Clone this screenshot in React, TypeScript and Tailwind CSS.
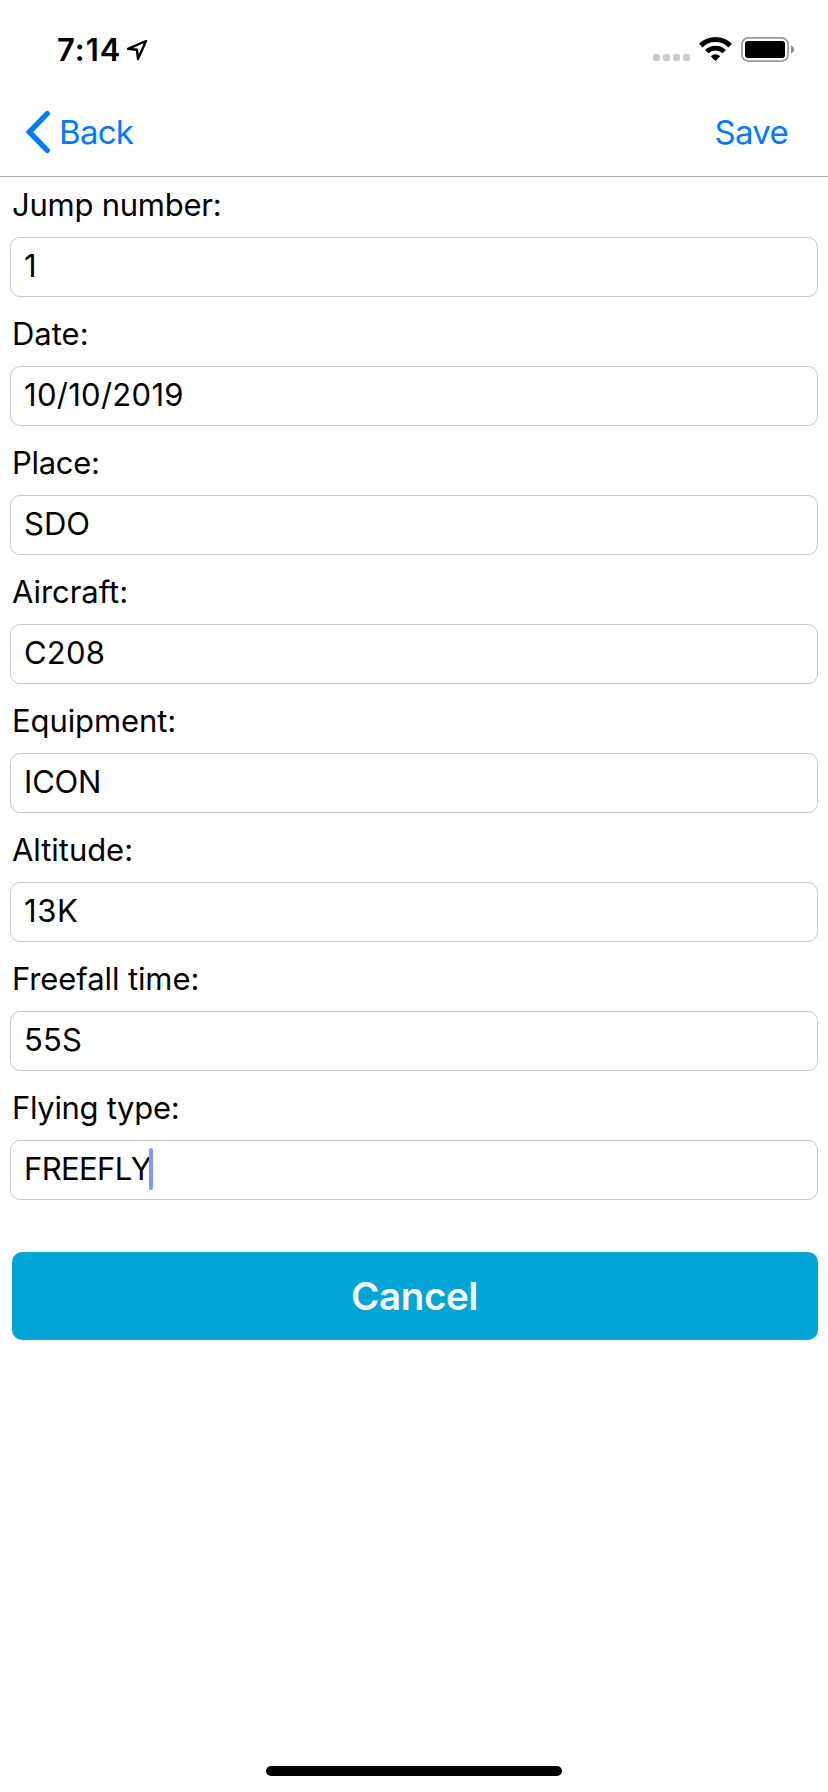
type Field = { label: string; value: string; labelClass: string; valueClass: string; focused?: boolean };

const fields: Field[] = [
  { label: "Jump number:", value: "1", labelClass: "tracking-[-0.25px]", valueClass: "tracking-[0px]" },
  { label: "Date:", value: "10/10/2019", labelClass: "tracking-[0px]", valueClass: "tracking-[0.28px]" },
  { label: "Place:", value: "SDO", labelClass: "tracking-[-0.3px]", valueClass: "tracking-[0px]" },
  { label: "Aircraft:", value: "C208", labelClass: "tracking-[-0.05px]", valueClass: "tracking-[0.2px]" },
  { label: "Equipment:", value: "ICON", labelClass: "tracking-[-0.1px]", valueClass: "tracking-[-0.2px]" },
  { label: "Altitude:", value: "13K", labelClass: "tracking-[-0.05px]", valueClass: "tracking-[0.6px]" },
  { label: "Freefall time:", value: "55S", labelClass: "tracking-[-0.1px]", valueClass: "tracking-[0.2px]" },
  { label: "Flying type:", value: "FREEFLY", labelClass: "tracking-[-0.32px]", valueClass: "tracking-[-0.6px]", focused: true },
];

function StatusBar() {
  return (
    <div className="flex h-[88px] items-start justify-between pl-[57px] pr-[34px] pt-[31px]">
      <div className="flex h-[38px] items-start">
        <span className="text-[31px] font-semibold leading-[38px] tracking-[1px]">7:14</span>
        <svg className="ml-[4px] mt-[7px]" width="24" height="24" viewBox="0 0 24 24" fill="none">
          <path d="M3 10.8 21 3 13 21 12 11.8Z" stroke="black" strokeWidth="2.4" strokeLinejoin="round" />
        </svg>
      </div>
      <div className="flex">
        <div className="mr-[9px] mt-[23px] flex gap-[3px]">
          {[0, 1, 2, 3].map((i) => (
            <span key={i} className="size-[7px] rounded-[2.5px] bg-[#cbcbcb]" />
          ))}
        </div>
        <svg className="mr-[9px] mt-[6px]" width="33" height="25" viewBox="0 0 33 25" fill="none" stroke="black">
          <path d="M1.8 8.6a21 21 0 0 1 29.4 0" strokeWidth="5" />
          <path d="M7.7 14.7a12.6 12.6 0 0 1 17.6 0" strokeWidth="4.6" />
          <path d="M16.5 24 11.8 19.2a6.8 6.8 0 0 1 9.4 0Z" fill="black" stroke="none" />
        </svg>
        <svg className="mt-[6px]" width="53" height="25" viewBox="0 0 53 25">
          <rect x="0.9" y="0.9" width="46.2" height="23.2" rx="6.5" fill="none" stroke="#999" strokeWidth="1.7" />
          <rect x="4" y="4" width="40" height="17" rx="3" fill="black" />
          <path d="M50 8.5c1.8.7 3 2.2 3 4s-1.2 3.3-3 4Z" fill="#888" />
        </svg>
      </div>
    </div>
  );
}

export default function App() {
  return (
    <div className="flex h-[1792px] w-[828px] flex-col bg-white font-['Inter',sans-serif] text-black">
      <StatusBar />
      <header className="flex h-[89px] items-center justify-between border-b border-[#adadad] pl-[24px] pr-[40px] text-[33px] text-[#007aff]">
        <button className="flex items-center">
          <svg width="28" height="46" viewBox="0 0 28 46" fill="none">
            <path d="M23.2 4.7 5.3 23 23.2 41.3" stroke="#007aff" strokeWidth="5.4" strokeLinecap="round" strokeLinejoin="miter" />
          </svg>
          <span className="ml-[7px] pt-[1px] tracking-[-0.7px]">Back</span>
        </button>
        <button className="pt-[1px] tracking-[-0.7px]">Save</button>
      </header>
      <main className="flex flex-col">
        <form className="flex flex-col gap-[9px] px-[10px]">
          {fields.map((f) => (
            <div key={f.label} className="flex flex-col text-[31px]">
              <label className="flex h-[60px] items-center pb-[3px] pl-[2px]">
                <span className={f.labelClass}>{f.label}</span>
              </label>
              <div className="flex h-[60px] items-center rounded-[10px] border border-[#c8c8c8] pb-[1px] pl-[13px]">
                <span className={"relative " + f.valueClass}>
                  {f.value}
                  {f.focused && <span className="absolute right-[-2px] top-[2px] h-[42px] w-[4px] rounded-full bg-[#7f99f6]" />}
                </span>
              </div>
            </div>
          ))}
        </form>
        <button className="ml-[12px] mr-[10px] mt-[52px] h-[88px] rounded-[10px] bg-[#03a5d4] pr-[1px] pt-[2px] text-[38.5px] font-semibold tracking-[-0.4px] text-[#f5f5f5]">Cancel</button>
      </main>
      <div className="mb-[16px] mt-auto h-[10px] w-[296px] self-center rounded-full bg-black" />
    </div>
  );
}
